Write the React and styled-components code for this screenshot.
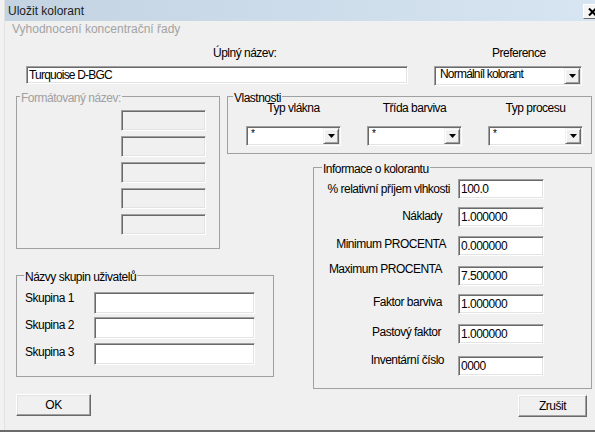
import React from 'react';
import styled, { createGlobalStyle } from 'styled-components';

const SANS = `"Liberation Sans", Arial, sans-serif`;

const Global = createGlobalStyle`
  html, body { margin: 0; padding: 0; background: #f0f0f0; }
  * { box-sizing: border-box; }
`;

const Screen = styled.div`
  width: 595px;
  height: 432px;
  overflow: hidden;
  display: flex;
  background: #f0f0f0;
  border-bottom: 2px solid #6b6b6b;
`;

const LeftStrip = styled.div`
  width: 5px;
  flex: none;
  background: #f2f2f2;
  border-right: 1px solid #e2e2e2;
`;

const Window = styled.div`
  flex: 1;
  min-width: 0;
  display: flex;
  flex-direction: column;
`;

const TitleBar = styled.div`
  height: 21px;
  flex: none;
  display: flex;
  align-items: flex-start;
  padding: 2px 0 0 3px;
  background: linear-gradient(to right, #c3d3e1, #d7e5f2);
  font: 12px/19px ${SANS};
  color: #1c1c1c;
`;

const CloseButton = styled.div`
  margin: 2px -5px 0 auto;
  width: 17px;
  height: 15px;
  flex: none;
  display: flex;
  align-items: center;
  padding-left: 4px;
  background: #f4f4f4;
  border: 1px solid;
  border-color: #ffffff #6a6a6a #6a6a6a #ffffff;
`;

const Body = styled.div`
  flex: 1;
  display: flex;
  flex-direction: column;
  padding: 0 3px 0 11px;
  font-family: ${SANS};
  font-size: 12px;
  letter-spacing: -0.5px;
  color: #000;
`;

const Subtitle = styled.div`
  margin: 1px 0 0 -4px;
  font: 12px/15px ${SANS};
  letter-spacing: 0;
  color: #a3a3a3;
`;

const TopGrid = styled.div`
  display: grid;
  grid-template-columns: 382px 148px;
  column-gap: 26px;
  margin-left: 10px;
  margin-top: ${p => p.$mt}px;
  align-items: start;
`;

const TopLabel = styled.div`
  line-height: 15px;
  padding-left: ${p => p.$pl}px;
  white-space: nowrap;
`;

const Field = styled.div`
  height: ${p => p.$h}px;
  width: ${p => (p.$w ? `${p.$w}px` : 'auto')};
  background: ${p => (p.$disabled ? '#f0f0f0' : '#ffffff')};
  border: 1px solid;
  border-color: #a0a0a0 #ffffff #ffffff #a0a0a0;
  box-shadow: inset 1px 1px 0 #696969, inset -1px -1px 0 #e3e3e3;
  padding: 0 2px;
  line-height: ${p => p.$h - 2}px;
  letter-spacing: ${p => (p.$tight ? '-0.8px' : 'inherit')};
  white-space: nowrap;
  overflow: hidden;
`;

const Combo = styled.div`
  height: 20px;
  display: flex;
  align-items: flex-start;
  background: #fff;
  border: 1px solid;
  border-color: #a0a0a0 #ffffff #ffffff #a0a0a0;
  box-shadow: inset 1px 1px 0 #696969, inset -1px -1px 0 #e3e3e3;
  padding: 1px;
`;

const ComboText = styled.div`
  flex: 1;
  padding-left: ${p => p.$pl}px;
  font-size: ${p => p.$size || 12}px;
  letter-spacing: ${p => (p.$size ? '0' : '-0.8px')};
  line-height: 12px;
  white-space: nowrap;
  overflow: hidden;
`;

const DropButton = styled.div`
  width: 16px;
  height: 16px;
  flex: none;
  display: flex;
  align-items: center;
  justify-content: center;
  background: #f0f0f0;
  border: 1px solid;
  border-color: #f0f0f0 #696969 #696969 #f0f0f0;
  box-shadow: inset 1px 1px 0 #ffffff, inset -1px -1px 0 #a0a0a0;
`;

const MainGrid = styled.div`
  display: grid;
  grid-template-columns: 204px 7px 86px 279px;
  grid-template-rows: 63px 116px 119px;
  margin-top: 5px;
`;

const Group = styled.fieldset`
  margin: ${p => p.$mt || 0}px 0 0 0;
  padding: 0;
  min-width: 0;
  border: 1px solid #a0a0a0;
  grid-column: ${p => p.$col};
  grid-row: ${p => p.$row};
  height: ${p => p.$h}px;
  width: ${p => (p.$w ? `${p.$w}px` : 'auto')};
  align-self: start;
`;

const Legend = styled.legend`
  margin-left: ${p => p.$ml}px;
  padding: 3px 1px 0;
  line-height: 8px;
  font-size: 12px;
  color: ${p => (p.$disabled ? '#a0a0a0' : '#000')};
  white-space: nowrap;
`;

const BoxStack = styled.div`
  display: flex;
  flex-direction: column;
  gap: 5px;
  padding: 8px 0 0 104px;
`;

const PropGrid = styled.div`
  display: grid;
  grid-template-columns: repeat(3, 95px);
  column-gap: 26px;
  row-gap: 12px;
  padding-left: 18px;
`;

const PropLabel = styled.div`
  line-height: 12px;
  text-align: center;
  white-space: nowrap;
`;

const InfoRow = styled.div`
  display: flex;
  justify-content: flex-end;
  align-items: flex-start;
  padding-right: 47px;
  margin-top: ${p => p.$mt}px;
`;

const InfoLabel = styled.div`
  line-height: 20px;
  margin: ${p => p.$dy}px ${p => p.$gap}px 0 0;
  white-space: nowrap;
`;

const GroupRow = styled.div`
  display: grid;
  grid-template-columns: 69px 161px;
  align-items: start;
  padding-left: 8px;
  margin-top: ${p => p.$mt}px;
`;

const GroupLabel = styled.div`
  line-height: 22px;
  margin-top: ${p => p.$dy}px;
  white-space: nowrap;
`;

const ButtonRow = styled.div`
  display: flex;
  justify-content: space-between;
  align-items: flex-start;
  margin-top: 5px;
  padding-right: 5px;
`;

const Button = styled.div`
  width: ${p => p.$w}px;
  height: 22px;
  margin-top: ${p => p.$mt || 0}px;
  background: #f0f0f0;
  border: 1px solid;
  border-color: #ffffff #696969 #696969 #ffffff;
  box-shadow: inset -1px -1px 0 #a0a0a0, inset 1px 1px 0 #e3e3e3;
  text-align: center;
  line-height: 20px;
`;

const Arrow = () => (
  <svg width="7" height="4" viewBox="0 0 7 4">
    <polygon points="0,0 7,0 3.5,4" fill="#000" />
  </svg>
);

const CloseX = () => (
  <svg width="9" height="8" viewBox="0 0 9 8">
    <path d="M1 0.5 L8 7.5 M8 0.5 L1 7.5" stroke="#000" strokeWidth="2" />
  </svg>
);

const infoRows = [
  { label: '% relativní příjem vlhkosti', value: '100.0', mt: 6, gap: 8, dy: -0.5 },
  { label: 'Náklady', value: '1.000000', mt: 8, gap: 16, dy: -1.5 },
  { label: 'Minimum PROCENTA', value: '0.000000', mt: 9, gap: 12, dy: -2.5 },
  { label: 'Maximum PROCENTA', value: '7.500000', mt: 10, gap: 16, dy: -7.5 },
  { label: 'Faktor barviva', value: '1.000000', mt: 8, gap: 16, dy: -2 },
  { label: 'Pastový faktor', value: '1.000000', mt: 10, gap: 17, dy: -2 },
  { label: 'Inventární číslo', value: '0000', mt: 12, gap: 14, dy: -6.5 },
];

const groupRows = [
  { label: 'Skupina 1', mt: 11, dy: -5 },
  { label: 'Skupina 2', mt: 3, dy: -3.5 },
  { label: 'Skupina 3', mt: 4, dy: -2 },
];

const props = ['Typ vlákna', 'Třída barviva', 'Typ procesu'];

export default function App() {
  return (
    <>
      <Global />
      <Screen>
        <LeftStrip />
        <Window>
          <TitleBar>
            Uložit kolorant
            <CloseButton>
              <CloseX />
            </CloseButton>
          </TitleBar>
          <Body>
            <Subtitle>Vyhodnocení koncentrační řady</Subtitle>
            <TopGrid $mt={9}>
              <TopLabel $pl={187}>Úplný název:</TopLabel>
              <TopLabel $pl={58}>Preference</TopLabel>
            </TopGrid>
            <TopGrid $mt={5}>
              <Field $h={18} $tight>Turquoise D-BGC</Field>
              <Combo>
                <ComboText $pl={4}>Normálníl kolorant</ComboText>
                <DropButton>
                  <Arrow />
                </DropButton>
              </Combo>
            </TopGrid>

            <MainGrid>
              <Group $col="1" $row="1 / 3" $h={158}>
                <Legend $ml={3} $disabled>Formátovaný název:</Legend>
                <BoxStack>
                  {[0, 1, 2, 3, 4].map(i => (
                    <Field key={i} $h={21} $w={85} $disabled />
                  ))}
                </BoxStack>
              </Group>

              <Group $col="3 / 5" $row="1" $h={63}>
                <Legend $ml={5}>Vlastnosti</Legend>
                <PropGrid>
                  {props.map(p => (
                    <PropLabel key={p}>{p}</PropLabel>
                  ))}
                  {props.map(p => (
                    <Combo key={p}>
                      <ComboText $pl={3} $size={10}>*</ComboText>
                      <DropButton>
                        <Arrow />
                      </DropButton>
                    </Combo>
                  ))}
                </PropGrid>
              </Group>

              <Group $col="4" $row="2 / 4" $h={227} $mt={8}>
                <Legend $ml={8}>Informace o kolorantu</Legend>
                {infoRows.map(r => (
                  <InfoRow key={r.label} $mt={r.mt}>
                    <InfoLabel $gap={r.gap} $dy={r.dy}>{r.label}</InfoLabel>
                    <Field $h={20} $w={86}>{r.value}</Field>
                  </InfoRow>
                ))}
              </Group>

              <Group $col="1 / 4" $row="3" $h={107} $w={258}>
                <Legend $ml={7}>Názvy skupin uživatelů</Legend>
                {groupRows.map(r => (
                  <GroupRow key={r.label} $mt={r.mt}>
                    <GroupLabel $dy={r.dy}>{r.label}</GroupLabel>
                    <Field $h={22} />
                  </GroupRow>
                ))}
              </Group>
            </MainGrid>

            <ButtonRow>
              <Button $w={75}>OK</Button>
              <Button $w={69} $mt={1}>Zrušit</Button>
            </ButtonRow>
          </Body>
        </Window>
      </Screen>
    </>
  );
}
